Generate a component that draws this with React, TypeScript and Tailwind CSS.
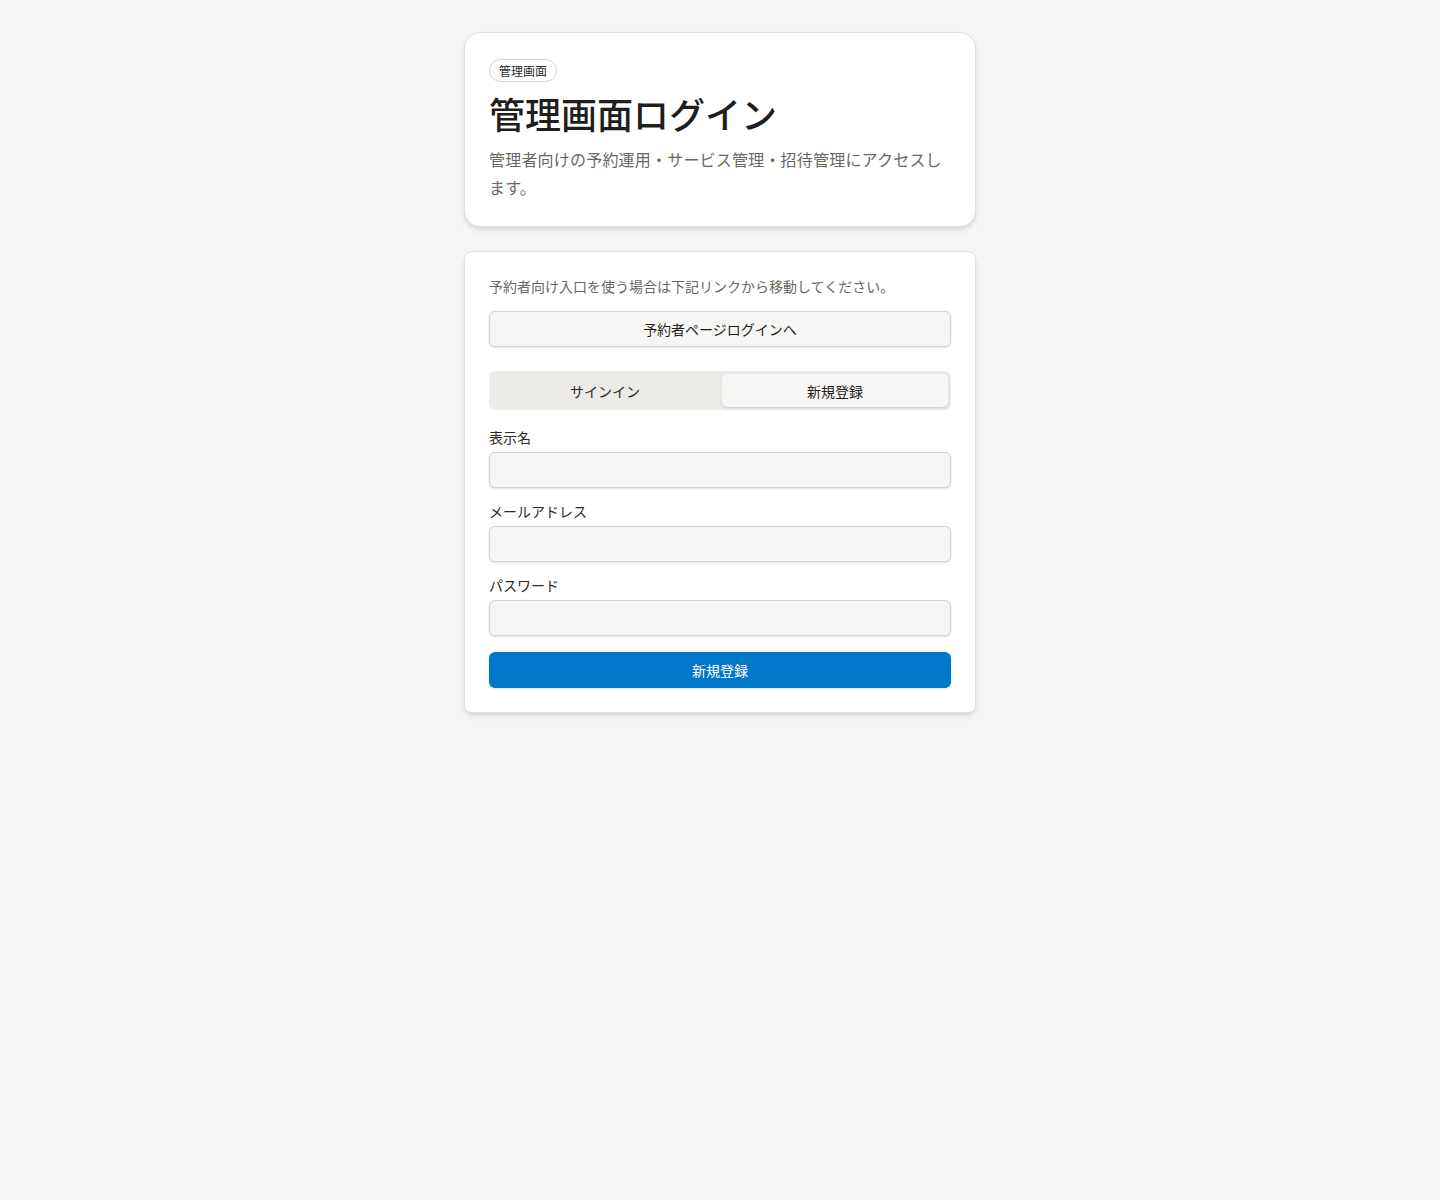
const Field = ({ label, type }: { label: string; type: string }) => (
  <label className="flex flex-col gap-[5px]">
    <span className="text-sm text-[#2b2a27] leading-[20px]">{label}</span>
    <input
      type={type}
      className="h-9 w-full rounded-md border border-[#d6d3cf] bg-[#f7f6f4] px-3 text-sm shadow-sm outline-none"
    />
  </label>
);

export default function App() {
  return (
    <div
      className="min-h-[1200px] bg-[#f7f6f4] py-8"
      style={{ fontFamily: '"Noto Sans CJK JP", "Noto Sans", sans-serif' }}
    >
      <div className="mx-auto flex w-[512px] flex-col gap-6">
        <section className="rounded-2xl border border-[#e3e0dc] bg-white px-6 pt-6 pb-[25px] shadow-md">
          <span className="inline-block rounded-full border border-[#d6d3cf] px-[9px] py-[2px] text-[12px] leading-[17px] text-[#2b2a27]">
            管理画面
          </span>
          <h1 className="mt-[9px] text-[36px] font-medium leading-[44px] text-[#1f1e1c]">
            管理画面ログイン
          </h1>
          <p className="mt-[10px] text-base leading-[28px] tracking-[0.2px] text-[#6b6760]">
            管理者向けの予約運用・サービス管理・招待管理にアクセスします。
          </p>
        </section>

        <section className="rounded-lg border border-[#e3e0dc] bg-white p-6 shadow-md">
          <p className="text-sm leading-[20px] text-[#6b6760]">
            予約者向け入口を使う場合は下記リンクから移動してください。
          </p>
          <button className="mt-[15px] h-9 w-full rounded-md border border-[#d6d3cf] bg-[#f7f6f4] text-sm text-[#1f1e1c] shadow-sm">
            予約者ページログインへ
          </button>

          <div className="mt-6 grid grid-cols-2 gap-1 rounded-md bg-[#ecebe8] p-[3px]">
            <button className="h-[33px] rounded-[5px] text-sm text-[#2b2a27]">サインイン</button>
            <button className="h-[33px] rounded-[5px] bg-[#f7f6f4] text-sm text-[#1f1e1c] shadow">
              新規登録
            </button>
          </div>

          <div className="mt-[17px] flex flex-col gap-[13px]">
            <Field label="表示名" type="text" />
            <Field label="メールアドレス" type="email" />
            <Field label="パスワード" type="password" />
            <button className="mt-[3px] h-9 w-full rounded-md bg-[#0077c8] text-sm text-white shadow-sm">
              新規登録
            </button>
          </div>
        </section>
      </div>
    </div>
  );
}
